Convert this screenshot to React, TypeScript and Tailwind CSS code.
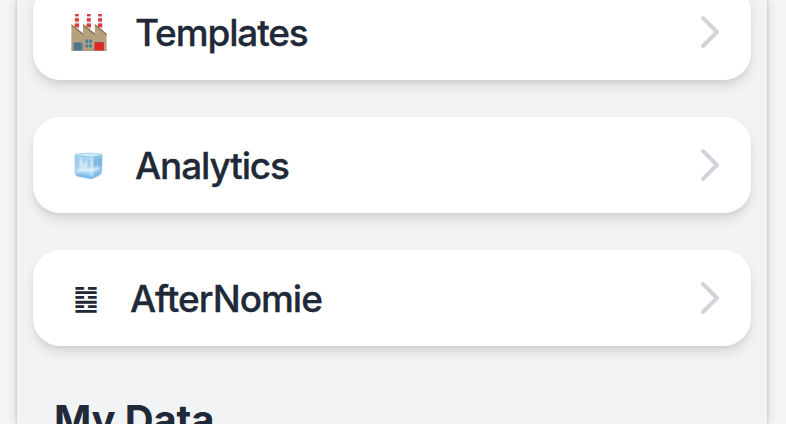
import React from 'react';

const FactoryIcon: React.FC = () => (
  <svg width="38" height="38" viewBox="0 0 38 38" aria-hidden="true">
    {[4.8, 16.7, 28].map((x) => (
      <g key={x}>
        <path d={`M${x + 0.3} 0.3h3.6l.6 20h-4.8z`} fill="#e4dfe2" />
        <path
          d={`M${x + 0.3} 0h3.6v2.3h-3.6zM${x + 0.1} 4.2h4v3.2h-4zM${x - 0.1} 9.4h4.4v3.8h-4.4z`}
          fill="#e0393c"
        />
      </g>
    ))}
    <path d="M1.4 36.6V10.5L13 20V10.5L24.8 20V10.5L36.6 20.5V36.6z" fill="#b5a17e" />
    <path
      d="M1.4 11.6V10L13.2 19.4V10L25 19.4V10L36.8 19.8V21.6L25 12V21.4L13.2 12V21.4z"
      fill="#8b7658"
    />
    <path d="M1.4 35.8h35.2v.8H1.4z" fill="#897657" />
    <path d="M3.5 28.5h9v8h-9z" fill="#557d92" />
    <path d="M6.4 28.5v8M9.6 28.5v8" stroke="#3e6478" strokeWidth=".7" />
    <path d="M15.4 25.6h2.8v3.4h-2.8zM19.2 25.6H22v3.4h-2.8zM15.4 30.2h2.8v3.4h-2.8zM19.2 30.2H22v3.4h-2.8z" fill="#4d7e97" />
    <path d="M24.5 28.5h9.4v8h-9.4z" fill="#db2729" />
    <path d="M24.5 28.5h9.4" stroke="#984338" strokeWidth=".8" />
  </svg>
);

const IceIcon: React.FC = () => (
  <svg width="32" height="28" viewBox="0 0 32 28" aria-hidden="true">
    <defs>
      <linearGradient id="ice-front" x1="0" y1="0" x2="0" y2="1">
        <stop stopColor="#a5d1ed" />
        <stop offset=".55" stopColor="#c2e1f4" />
        <stop offset="1" stopColor="#86c0ea" />
      </linearGradient>
      <filter id="ice-soft">
        <feGaussianBlur stdDeviation=".8" />
      </filter>
    </defs>
    <path d="M1.6 3.4Q1.6 1.8 4 1.5L16 .6 27.6 1.4Q29.6 1.6 29.5 3.4L29 20Q29 22 27 22.8L19 27 5 24.6Q2.6 24 2.4 22z" fill="url(#ice-front)" />
    <path d="M19.5 5.5L29.2 3 28.6 21 19.5 26z" fill="#8dc3e8" />
    <path d="M3 2.6L16 1.2 28.4 2.2 19 5z" fill="#cfe8f7" />
    <g filter="url(#ice-soft)">
      <path d="M4.6 6v11M11 7v4M16 7v9" stroke="#70b0da" strokeWidth="1.4" />
      <path d="M22 7v7M27 6v11" stroke="#64a6d8" strokeWidth="1.6" />
      <path d="M8 7v8M13 9v6M19 6v18" stroke="#e4f4fd" strokeWidth="1.6" />
      <path d="M4.5 18.5l7-1 7 1 8-3" stroke="#e8f6fe" strokeWidth="2.4" fill="none" />
      <path d="M4 23l14 2.4 9-3.6" stroke="#62ade4" strokeWidth="1.5" fill="none" />
    </g>
    <path d="M2.2 4v18.5M2.4 3.8L19 5.4 29 3.2" stroke="#89bfe1" strokeWidth=".7" fill="none" />
  </svg>
);

const Chevron: React.FC = () => (
  <svg width="24" height="36" viewBox="0 0 24 36" fill="none" aria-hidden="true">
    <path
      d="M5 4L19 18L5 32"
      stroke="#d1d5db"
      strokeWidth="4"
      strokeLinecap="round"
      strokeLinejoin="round"
    />
  </svg>
);

interface MenuRowProps {
  icon: React.ReactNode;
  children: React.ReactNode;
}

const MenuRow: React.FC<MenuRowProps> = ({ icon, children }) => (
  <button
    type="button"
    className="flex h-24 w-full shrink-0 items-center rounded-[27px] bg-white pr-[29px] pl-[37px] text-left shadow-[0_7px_14px_-2px_rgba(0,0,0,0.13),0_3px_6px_-2px_rgba(0,0,0,0.08)]"
  >
    {icon}
    <span className="flex-1 pt-0.5 text-[37px] leading-[48px] font-medium tracking-[-1.15px] [-webkit-text-stroke:0.3px_#1f2937]">
      {children}
    </span>
    <Chevron />
  </button>
);

const App: React.FC = () => (
  <div className="h-[424px] overflow-hidden bg-[#f4f4f4] pr-[19px] pl-[17px] font-[Inter,sans-serif] text-[#1f2937]">
    <main className="flex h-full flex-col bg-[#f2f3f5] px-4 shadow-[0_0_10px_rgba(0,0,0,0.12),0_0_4px_rgba(0,0,0,0.18)]">
      <div className="-mt-4 flex flex-col gap-[37px]">
        <MenuRow
          icon={
            <span className="w-[65px] pt-0.5">
              <FactoryIcon />
            </span>
          }
        >
          Templates
        </MenuRow>
        <MenuRow
          icon={
            <span className="w-[65px] pt-0.5 pl-[3px]">
              <IceIcon />
            </span>
          }
        >
          Analytics
        </MenuRow>
        <MenuRow
          icon={
            <span className="w-[60px] pb-px pl-[3px] font-['DejaVu_Sans',sans-serif] text-[29px] leading-8">
              ䷾
            </span>
          }
        >
          <span className="tracking-[-1px]">AfterNomie</span>
        </MenuRow>
        <h2 className="mt-[9px] pl-[21px] text-[40px] leading-[56px] font-bold tracking-[-0.15px]">
          My Data
        </h2>
      </div>
    </main>
  </div>
);

export default App;
